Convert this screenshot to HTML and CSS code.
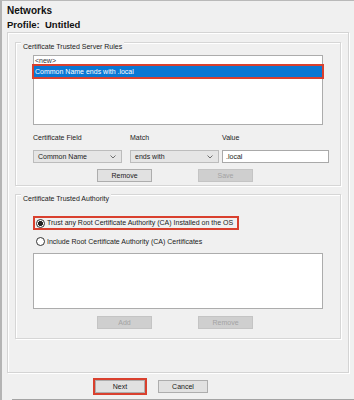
FILE: index.html
```html
<!DOCTYPE html>
<html lang="en-US">
<head>
	<meta charset="utf-8">
	<title>Networks - Profile</title>
	<link rel="stylesheet" href="styles.css">
</head>
<body>
<div class="window">
	<!--Page heading-->
	<div class="header">
		<h1>Networks</h1>
		<h2>Profile:&nbsp; Untitled</h2>
	</div>

	<div class="panel">
		<!--Server rules group-->
		<div class="group rules">
			<div class="group-title">Certificate Trusted Server Rules</div>
			<div class="list rule-list">
				<div class="list-item">&lt;new&gt;</div>
				<div class="list-item selected">Common Name ends with .local</div>
			</div>
			<div class="fields">
				<span>Certificate Field</span>
				<span>Match</span>
				<span>Value</span>
				<div class="combo combo-field">Common Name
					<svg class="chevron" width="6" height="4" viewBox="0 0 6 4"><polyline points="0.5,0.5 3,3 5.5,0.5" fill="none" stroke="#606060" stroke-width="0.9"/></svg>
				</div>
				<div class="combo combo-match">ends with
					<svg class="chevron" width="6" height="4" viewBox="0 0 6 4"><polyline points="0.5,0.5 3,3 5.5,0.5" fill="none" stroke="#606060" stroke-width="0.9"/></svg>
				</div>
				<div class="textbox">.local</div>
			</div>
			<div class="buttons">
				<button class="btn">Remove</button>
				<button class="btn" disabled>Save</button>
			</div>
		</div>

		<!--Trusted authority group-->
		<div class="group authority">
			<div class="group-title">Certificate Trusted Authority</div>
			<label class="radio highlight"><span class="dot checked"></span>Trust any Root Certificate Authority (CA) Installed on the OS</label>
			<label class="radio second"><span class="dot"></span>Include Root Certificate Authority (CA) Certificates</label>
			<div class="list ca-list"></div>
			<div class="buttons">
				<button class="btn" disabled>Add</button>
				<button class="btn" disabled>Remove</button>
			</div>
		</div>
	</div>

	<div class="footer">
		<button class="btn wide highlight">Next</button>
		<button class="btn wide">Cancel</button>
	</div>
</div>
</body>
</html>
```
FILE: styles.css
```css
html {
	background: #f0f0f0;
}
body {
	margin: 0;
	width: 354px;
	height: 400px;
	overflow: hidden;
	font-family: "Liberation Sans", Arial, sans-serif;
	font-size: 7px;
	color: #1a1a1a;
}
.window {
	box-sizing: border-box;
	height: 400px;
	border-top: 1px solid #b9b9b9;
	border-left: 2px solid #b4b4b4;
}
.header {
	padding: 2px 0 0 5px;
}
.header h1,
.header h2 {
	margin: 0;
	font-size: 10px;
	font-weight: bold;
	color: #111;
}
.header h1 {
	line-height: 15px;
}
.header h2 {
	font-size: 9.5px;
	line-height: 14px;
}
.panel {
	box-sizing: border-box;
	height: 341px;
	width: 342px;
	margin-left: 5px;
	padding: 9px 0 0 7px;
	border: 1px solid #d4d4d4;
	box-shadow: inset 1px 1px 0 #fff, 1px 1px 0 #fff;
}
.group {
	box-sizing: border-box;
	width: 326px;
	padding: 0 0 0 17px;
	border: 1px solid #d6d6d6;
	box-shadow: inset 1px 1px 0 #fff, 1px 1px 0 #fff;
}
.rules {
	padding-bottom: 3px;
}
.authority {
	margin-top: 8px;
	padding-bottom: 9px;
}
.group-title {
	display: inline-block;
	margin: -3px 0 0 -12px;
	padding: 0 2px;
	line-height: 9px;
	background: #f0f0f0;
}
.list {
	box-sizing: border-box;
	width: 290px;
	background: #fff;
	border: 1px solid #acacac;
}
.rule-list {
	height: 70px;
	margin-top: 4px;
}
.ca-list {
	height: 56px;
	margin-top: 7px;
}
.list-item {
	height: 10px;
	line-height: 10px;
	padding-left: 1px;
	color: #333;
}
.list-item.selected {
	height: 11px;
	line-height: 11px;
	background: #0a78d4;
	color: #fff;
	outline: 2px solid #d9402e;
}
.fields {
	display: grid;
	grid-template-columns: 97px 92px 107px;
	grid-template-rows: 9px 13px;
	row-gap: 8px;
	margin-top: 8px;
	line-height: 9px;
}
.combo {
	box-sizing: border-box;
	width: 89px;
	display: flex;
	align-items: center;
	justify-content: space-between;
	padding: 0 5px 0 4px;
	background: #e5e5e5;
	border: 1px solid #bcbcbc;
}
.textbox {
	box-sizing: border-box;
	width: 107px;
	padding-left: 3px;
	line-height: 11px;
	background: #fff;
	border: 1px solid #a9a9a9;
}
.buttons {
	display: flex;
	gap: 46px;
	padding-left: 64px;
	margin-top: 6px;
}
.authority .buttons {
	margin-top: 7px;
}
.btn {
	box-sizing: border-box;
	width: 55px;
	height: 13px;
	padding: 0;
	font-family: "Liberation Sans", Arial, sans-serif;
	font-size: 7px;
	color: #1a1a1a;
	background: #e1e1e1;
	border: 1px solid #adadad;
	border-radius: 0;
}
.btn:disabled {
	color: #a3a3a3;
	background: #cfcfcf;
	border-color: #c4c4c4;
}
.radio {
	display: flex;
	align-items: center;
	gap: 2px;
	width: max-content;
	height: 10px;
	line-height: 10px;
}
.radio.highlight {
	margin: 15px 0 0 2px;
	padding: 0 4px 0 1px;
	outline: 2px solid #d9402e;
}
.radio.second {
	height: 9px;
	margin-top: 9px;
	padding-left: 3px;
}
.dot {
	box-sizing: border-box;
	width: 9px;
	height: 9px;
	border: 1px solid #333;
	border-radius: 50%;
	background: #fff;
}
.dot.checked {
	background: radial-gradient(circle, #222 0 2.2px, #fff 2.7px);
}
.footer {
	display: flex;
	gap: 13px;
	margin-left: 10px;
	padding: 7px 0 6px 83px;
	border-bottom: 2px solid #a4a4a4;
}
.btn.wide {
	width: 50px;
}
.btn.highlight {
	outline: 2px solid #d9402e;
}
```
